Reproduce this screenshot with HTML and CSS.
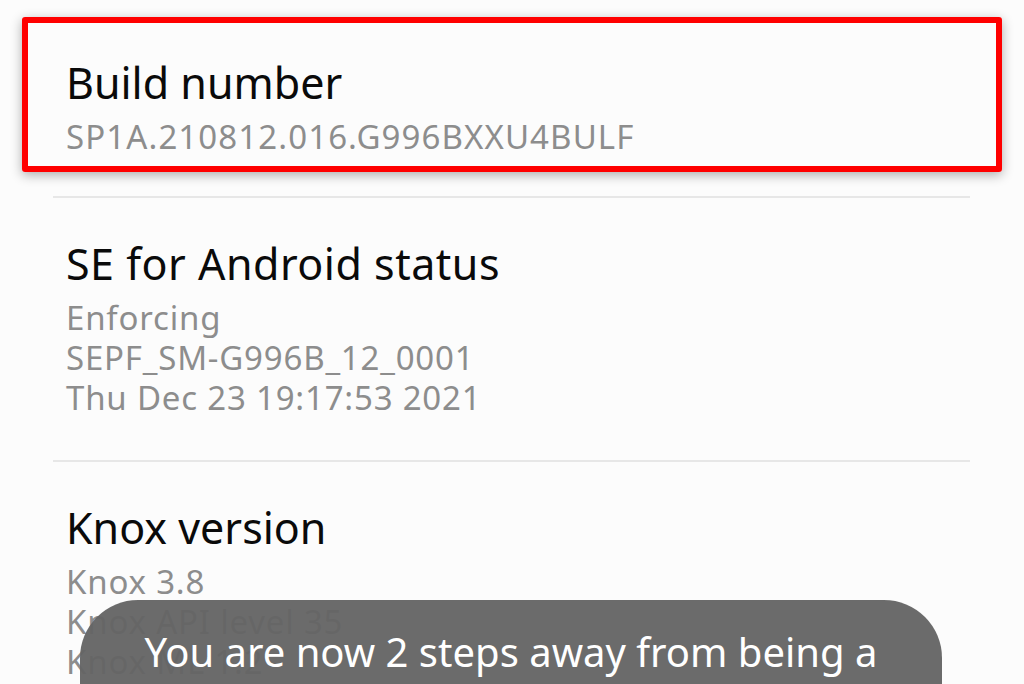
FILE: index.html
```html
<!DOCTYPE html>
<html lang="en">

<head>
    <meta charset="UTF-8">
    <meta name="viewport" content="width=device-width, initial-scale=1.0">
    <title>Software information</title>
    <link rel="stylesheet" href="styles.css">
</head>

<body>

    <div class="list">
        <!-- highlighted row -->
        <div class="item mark">
            <p class="title">Build number</p>
            <p class="sub">SP1A.210812.016.G996BXXU4BULF</p>
        </div>
        <div class="line"></div>

        <div class="item">
            <p class="title wide">SE for Android status</p>
            <p class="sub">Enforcing</p>
            <p class="sub">SEPF_SM-G996B_12_0001</p>
            <p class="sub">Thu Dec 23 19:17:53 2021</p>
        </div>
        <div class="line"></div>

        <div class="item">
            <p class="title">Knox version</p>
            <p class="sub">Knox 3.8</p>
            <p class="sub">Knox API level 35</p>
            <p class="sub">Knox ML 1.2</p>
        </div>
    </div>

    <div class="toast">You are now 2 steps away from being a developer.</div>

</body>

</html>
```

FILE: styles.css
```css
* {
    margin: 0;
    padding: 0;
}

html,
body {
    height: 100%;
    overflow: hidden;
}

body {
    position: relative;
    background: #fcfcfc;
    font-family: "Noto Sans", "Open Sans", sans-serif;
    color: #0a0a0a;
}

.item {
    padding: 40px 66px 42px;
}

.item .title {
    font-size: 43px;
    line-height: 52px;
    margin-bottom: 8px;
}

.item .wide {
    letter-spacing: .5px;
}

.item .sub {
    font-size: 33px;
    line-height: 40px;
    letter-spacing: .8px;
    color: #8d8d8d;
}

/* red frame round the build number */
.mark {
    margin: 17px 22px 24px;
    padding: 34px 38px 9px;
    border: 6px solid #ff0000;
    border-radius: 3px;
    box-shadow: 0 3px 12px rgba(0, 0, 0, .32);
}

.mark .sub {
    letter-spacing: 1.1px;
}

.line {
    height: 2px;
    margin: 0 54px 0 53px;
    background: #e7e7e7;
}

.toast {
    position: absolute;
    top: 600px;
    left: 80px;
    width: 862px;
    box-sizing: border-box;
    padding: 28px 50px 30px;
    background: rgba(100, 100, 100, .955);
    border-radius: 58px;
    color: #fff;
    font-size: 40px;
    line-height: 48px;
    text-align: center;
}
```
